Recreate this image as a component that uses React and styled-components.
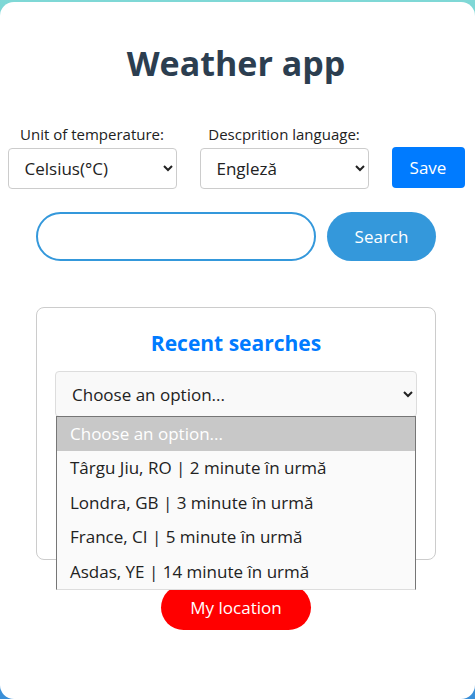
import React, { useState } from 'react'
import styled, { createGlobalStyle } from 'styled-components'

const GlobalStyle = createGlobalStyle`
    html, body {
        margin: 0;
        padding: 0;
    }
    body {
        font-family: "Open Sans", "Noto Sans", sans-serif;
        background: linear-gradient(180deg, #7fd8d6 0%, #3a8fd8 100%);
        min-height: 100vh;
    }
`

const recent = [
    'Târgu Jiu, RO | 2 minute în urmă',
    'Londra, GB | 3 minute în urmă',
    'France, CI | 5 minute în urmă',
    'Asdas, YE | 14 minute în urmă',
]

export default function App() {
    const [ unit, setUnit ] = useState('metric')
    const [ lang, setLang ] = useState('en')
    const [ query, setQuery ] = useState('')

    return (
        <Page>
            <GlobalStyle />
            <Card>
                <Title>Weather app</Title>
                <Settings>
                    <Field>
                        <Label>Unit of temperature:</Label>
                        <Select value={unit} onChange={e => setUnit(e.target.value)}>
                            <option value='metric'>Celsius(°C)</option>
                            <option value='imperial'>Fahrenheit(°F)</option>
                        </Select>
                    </Field>
                    <Field>
                        <Label>Descprition language:</Label>
                        <Select value={lang} onChange={e => setLang(e.target.value)}>
                            <option value='en'>Engleză</option>
                            <option value='ro'>Română</option>
                        </Select>
                    </Field>
                    <SaveButton>Save</SaveButton>
                </Settings>
                <SearchRow>
                    <SearchInput value={query} onChange={e => setQuery(e.target.value)} />
                    <PillButton $bg='#3498db'>Search</PillButton>
                </SearchRow>
                <Recent>
                    <RecentTitle>Recent searches</RecentTitle>
                    <DropWrap>
                        <RecentSelect defaultValue=''>
                            <option value=''>Choose an option...</option>
                            {recent.map(r => <option key={r}>{r}</option>)}
                        </RecentSelect>
                        <OptionList>
                            <Option $active>Choose an option...</Option>
                            {recent.map(r => <Option key={r}>{r}</Option>)}
                        </OptionList>
                    </DropWrap>
                </Recent>
                <PillButton $bg='#ff0000' $wide>My location</PillButton>
            </Card>
        </Page>
    )
}

const Page = styled.div`
    padding-top: 2px;
    min-height: 100vh;
    box-sizing: border-box;
`

const Card = styled.div`
    background: #fff;
    border-radius: 14px;
    min-height: 697px;
    display: flex;
    flex-direction: column;
    align-items: center;
    padding: 1px 3px 0 0;
    box-sizing: border-box;
`

const Title = styled.h1`
    font-size: 34px;
    font-weight: 700;
    color: #2c3e50;
    margin: 36px 0 37px;
    line-height: 48px;
`

const Settings = styled.div`
    display: flex;
    align-items: flex-end;
    justify-content: center;
    gap: 23px;
`

const Field = styled.div`
    display: flex;
    flex-direction: column;
    align-items: center;
    gap: 4px;
`

const Label = styled.label`
    font-size: 15px;
    color: #222;
`

const Select = styled.select`
    width: 169px;
    height: 41px;
    padding: 0 12px;
    font-family: "Open Sans", sans-serif;
    font-size: 17px;
    color: #222;
    background: #fff;
    border: 1px solid #ccc;
    border-radius: 4px;
`

const SaveButton = styled.button`
    width: 73px;
    height: 41px;
    margin-bottom: 1px;
    border: none;
    border-radius: 4px;
    background: #007bff;
    color: #fff;
    font-family: "Open Sans", sans-serif;
    font-size: 17px;
`

const SearchRow = styled.div`
    display: flex;
    gap: 11px;
    margin-top: 23px;
`

const SearchInput = styled.input`
    width: 280px;
    height: 49px;
    box-sizing: border-box;
    border: 2px solid #3498db;
    border-radius: 25px;
    padding: 0 15px;
    font-size: 17px;
    outline: none;
`

const PillButton = styled.button`
    width: ${p => p.$wide ? '150px' : '109px'};
    height: ${p => p.$wide ? '45px' : '49px'};
    border: none;
    border-radius: 25px;
    background: ${p => p.$bg};
    color: #fff;
    font-family: "Open Sans", sans-serif;
    font-size: 17px;
    margin-top: ${p => p.$wide ? '25px' : '0'};
`

const Recent = styled.div`
    width: 400px;
    height: 253px;
    box-sizing: border-box;
    margin-top: 46px;
    border: 1px solid #ccc;
    border-radius: 8px;
    padding: 20px 18px;
    display: flex;
    flex-direction: column;
    align-items: center;
`

const RecentTitle = styled.h2`
    margin: 0 0 13px;
    font-size: 21px;
    font-weight: 700;
    color: #007bff;
    line-height: 30px;
`

const DropWrap = styled.div`
    position: relative;
    width: 100%;
`

const RecentSelect = styled.select`
    width: 100%;
    height: 46px;
    padding: 0 12px;
    font-family: "Open Sans", sans-serif;
    font-size: 17px;
    color: #222;
    background: #f9f9f9;
    border: 1px solid #ddd;
    border-radius: 4px;
`

const OptionList = styled.div`
    position: absolute;
    top: 45px;
    left: 1px;
    right: 1px;
    height: 172px;
    overflow: hidden;
    background: #fafafa;
    border: 1px solid #767676;
    border-bottom-color: #ddd;
    z-index: 2;
`

const Option = styled.div`
    height: 34.4px;
    line-height: 34.4px;
    padding: 0 13px;
    font-size: 17px;
    color: ${p => p.$active ? '#fff' : '#222'};
    background: ${p => p.$active ? '#c8c8c8' : 'transparent'};
    white-space: nowrap;
`
